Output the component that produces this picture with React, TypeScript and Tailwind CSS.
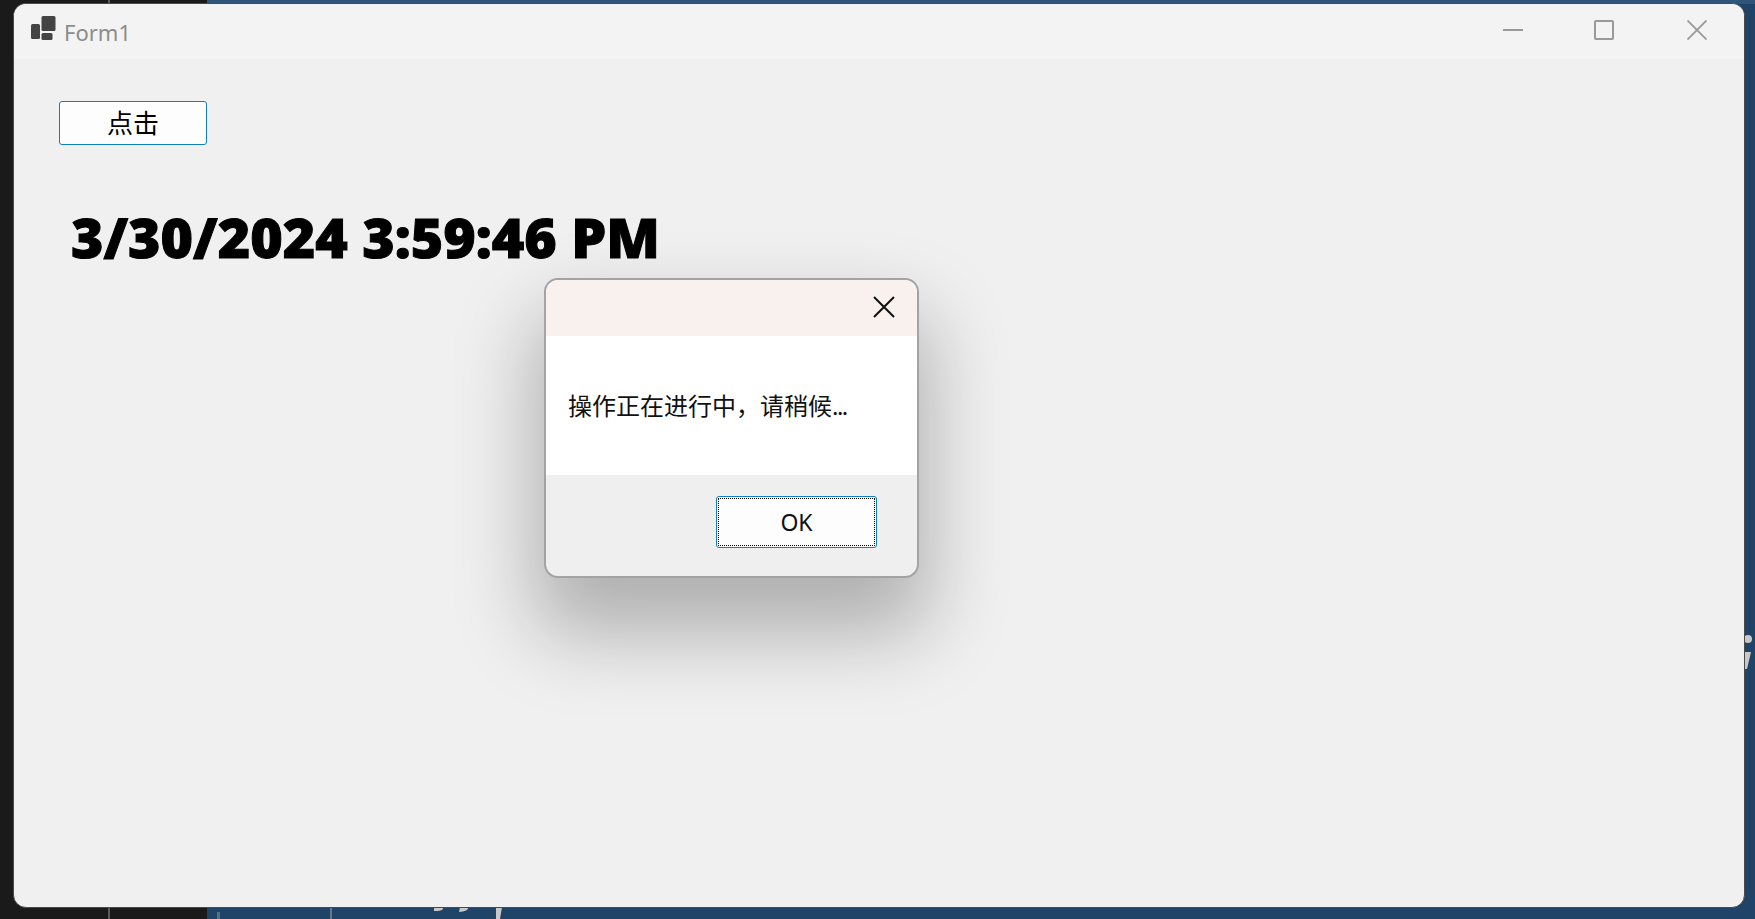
import React from "react";

const cjk = "font-['Noto_Sans','Noto_Sans_CJK_SC',sans-serif]";

const App: React.FC = () => {
  return (
    <div className="relative w-[1755px] h-[919px] overflow-hidden flex bg-[#1f4468]">
      {/* Desktop behind the form */}
      <div className="w-[207px] h-full bg-[#1a1a1a]" />
      <div className="flex-1 flex flex-col">
        <div className="h-[4px] bg-[#2f5678]" />
      </div>
      <div className="absolute left-[108px] top-0 w-[2px] h-full bg-[#5a5a5a]" />
      <div className="absolute left-[217px] top-[912px] w-[3px] h-[7px] bg-[#55708a]" />
      <div className="absolute left-[330px] top-[900px] w-[2px] h-[19px] bg-[#66798c]" />
      <svg className="absolute left-[430px] top-[905px]" width="80" height="14" viewBox="0 0 80 14">
        <path d="M4 2h10l-2 3c-2 1-6 1-8 1zM30 2h9l-2 3c-2 1-6 2-8 2zM66 2h6l-2 12h-4z" fill="#c9c9c9" />
      </svg>
      <svg className="absolute left-[1740px] top-[630px]" width="15" height="44" viewBox="0 0 15 44">
        <circle cx="8" cy="9" r="4" fill="#c9c9c9" />
        <path d="M3 22h8l-4 17h-4z" fill="#c9c9c9" />
      </svg>

      {/* Form1 window */}
      <div className="absolute left-[13px] top-[3px] w-[1732px] h-[905px] rounded-[13px] border border-[#4a4a4a] bg-[#f0f0f0] flex flex-col overflow-hidden">
        <div className="h-[55px] bg-[#f3f3f3] flex items-center shrink-0">
          <svg className="ml-[17px] mt-[-6px]" width="25" height="25" viewBox="0 0 25 25">
            <rect x="0" y="8" width="9" height="15" rx="1.5" fill="#444" />
            <rect x="10.5" y="0" width="14" height="15" rx="1.5" fill="#444" />
            <rect x="10.5" y="17" width="11" height="7" rx="1.5" fill="#444" />
          </svg>
          <span className={`${cjk} ml-[8px] text-[22px] leading-none text-[#8c8c8c]`}>Form1</span>
          <div className="ml-auto mr-[37px] mt-[-4px] flex items-center">
            <div className="w-[20px] h-[2px] bg-[#999]" />
            <div className="ml-[71px] w-[20px] h-[20px] rounded-[2px] border-2 border-[#999]" />
            <svg className="ml-[73px]" width="20" height="20" viewBox="0 0 20 20">
              <path d="M0.5 0.5L19.5 19.5M19.5 0.5L0.5 19.5" stroke="#999" strokeWidth="1.8" />
            </svg>
          </div>
        </div>
        <div className="flex-1 pl-[45px] pt-[42px]">
          <button className={`${cjk} block w-[148px] h-[44px] rounded-[3px] border-[1.5px] border-[#0f7fc4] bg-[#fdfdfd] text-[26px] leading-none text-black`}>
            点击
          </button>
          <div className="mt-[56px] ml-[12px] font-['Noto_Sans',sans-serif] font-black text-[55.5px] leading-[72px] text-black whitespace-nowrap [-webkit-text-stroke:1px_black]">
            3/30/2024 3:59:46 PM
          </div>
        </div>
      </div>

      {/* Message box */}
      <div className="absolute left-[544px] top-[278px] w-[375px] h-[300px] rounded-[14px] border-2 border-[#a3a3a3] bg-[#efefef] shadow-[0_46px_80px_10px_rgba(0,0,0,0.27)] flex flex-col">
        <div className="h-[56px] shrink-0 rounded-t-[12px] bg-[#f8f1ed] flex items-center justify-end pr-[22px] pb-[2px]">
          <svg width="22" height="22" viewBox="0 0 22 22">
            <path d="M1 1L21 21M21 1L1 21" stroke="#111" strokeWidth="2" />
          </svg>
        </div>
        <div className={`${cjk} h-[139px] shrink-0 bg-white flex items-center pl-[22px] text-[24px] leading-none text-[#111] whitespace-nowrap`}>
          操作正在进行中，请稍候<span className="tracking-[-1.5px]">...</span>
        </div>
        <div className="flex-1 flex justify-end items-start pt-[21px] pr-[40px]">
          <button className={`${cjk} w-[161px] h-[52px] rounded-[3px] border-[1.5px] border-[#0f7fc4] bg-[#fdfdfd] outline-1 outline-dotted outline-black outline-offset-[-3px] text-[23px] leading-none text-[#111]`}>
            OK
          </button>
        </div>
      </div>
    </div>
  );
};

export default App;
